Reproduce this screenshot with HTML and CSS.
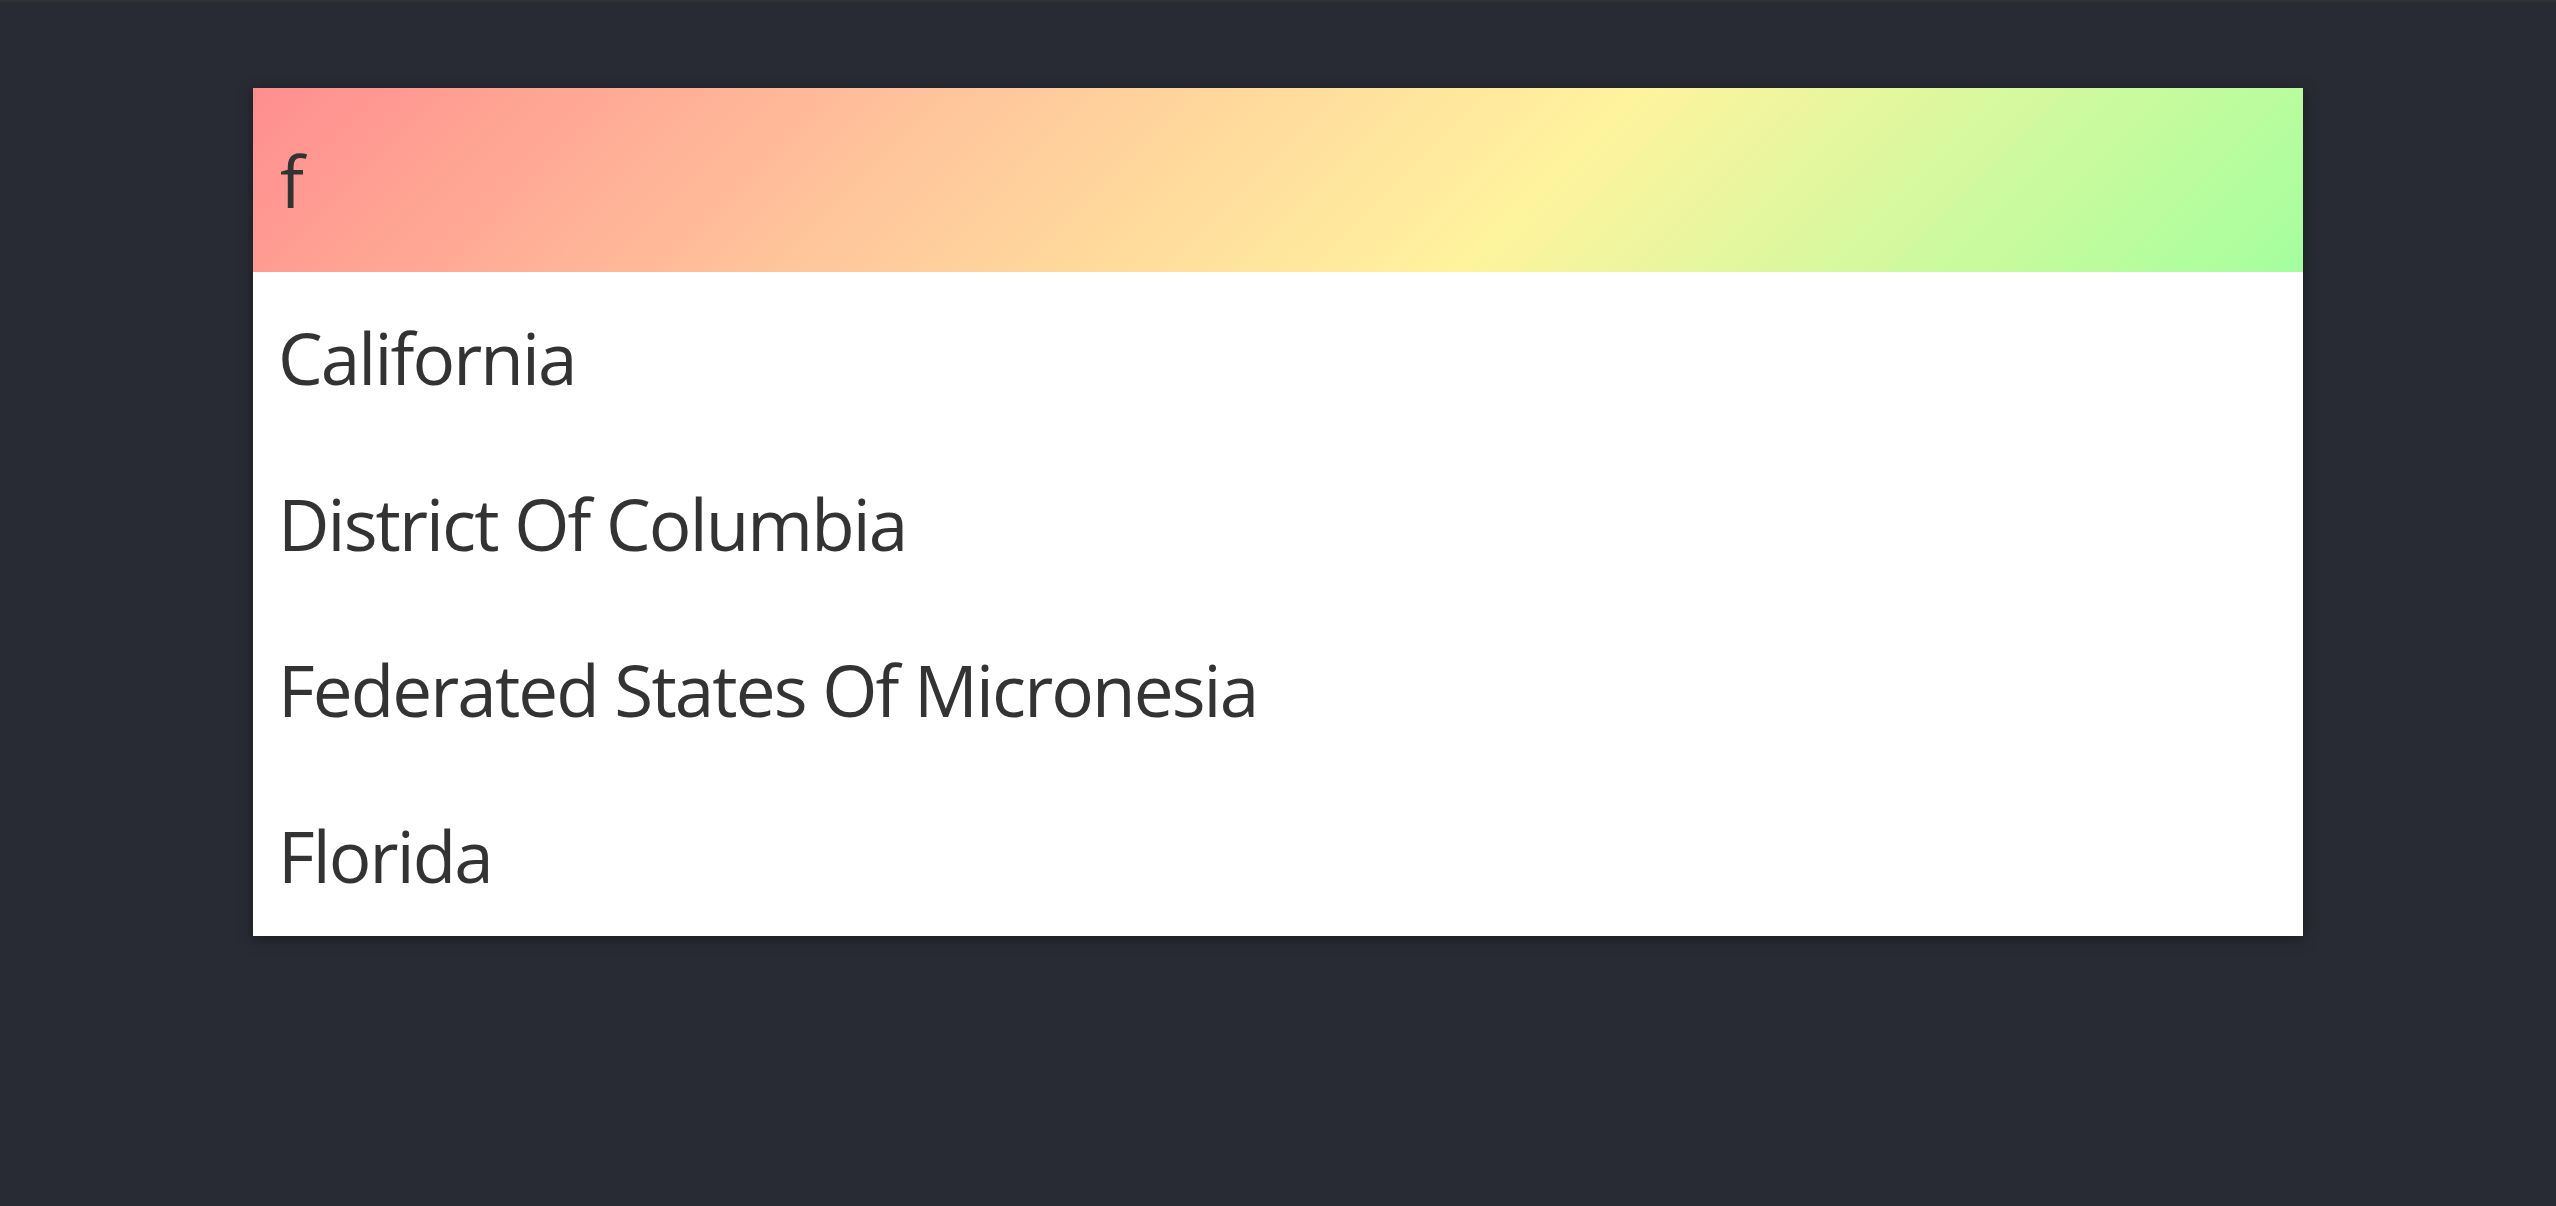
FILE: index.html
```html
<!DOCTYPE html>
<html lang="en">
<head>
<meta charset="utf-8">
<title>Autocomplete</title>
<link rel="stylesheet" href="styles.css">
</head>
<body>
<div class="page">
  <div class="autocomplete">
    <input class="search" type="text" value="f" aria-label="State">
    <ul class="results">
      <li class="result">California</li>
      <li class="result">District Of Columbia</li>
      <li class="result">Federated States Of Micronesia</li>
      <li class="result">Florida</li>
    </ul>
  </div>
</div>
</body>
</html>
```

FILE: styles.css
```css
html, body {
  margin: 0;
  padding: 0;
  height: 100%;
}

body {
  background: #282b34;
  border-top: 2px solid #2f3237;
  box-sizing: border-box;
  font-family: "Open Sans", "Noto Sans", sans-serif;
  color: #333333;
}

.page {
  padding-top: 86px;
  display: flex;
  justify-content: center;
}

.autocomplete {
  width: 2050px;
  background: #ffffff;
  box-shadow: 0 3px 14px rgba(0, 0, 0, 0.35);
  display: flex;
  flex-direction: column;
}

.search {
  display: block;
  width: 100%;
  height: 184px;
  box-sizing: border-box;
  margin: 0;
  border: none;
  outline: none;
  padding: 0 0 0 27px;
  font-family: inherit;
  font-size: 71px;
  color: #333333;
  background: linear-gradient(135deg, #ff8e8f 0%, #ffc59b 32%, #fff39e 62%, #a4ff9e 100%);
}

.results {
  list-style: none;
  margin: 0;
  padding: 0;
}

.result {
  height: 166px;
  line-height: 166px;
  padding-left: 25px;
  padding-top: 3px;
  box-sizing: border-box;
  font-size: 71px;
  letter-spacing: -1.9px;
  white-space: nowrap;
}
```
